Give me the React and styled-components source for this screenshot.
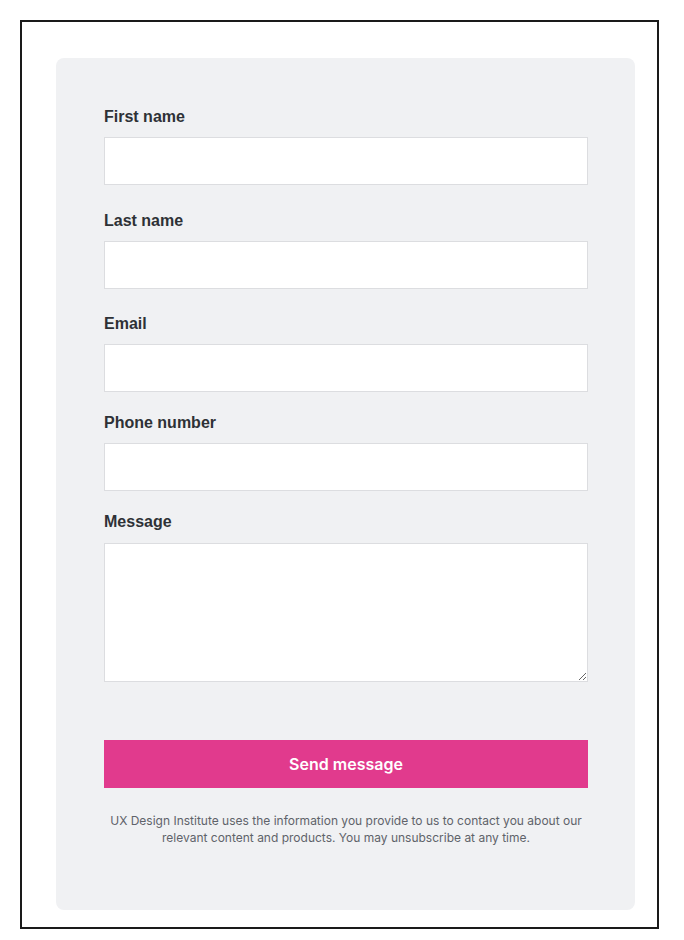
import React from "react";
import styled, { createGlobalStyle } from "styled-components";

const Global = createGlobalStyle`
  html, body { margin: 0; padding: 0; background: #ffffff; }
  * { box-sizing: border-box; }
`;

const Frame = styled.div`
  margin: 20px 0 0 20px;
  width: 639px;
  border: 2px solid #1a1a1a;
  padding: 36px 22px 17px 34px;
  background: #ffffff;
`;

const Card = styled.form`
  background: #f0f1f3;
  border-radius: 8px;
  padding: 49px 47px 64px 48px;
  display: flex;
  flex-direction: column;
`;

const Field = styled.div`
  display: flex;
  flex-direction: column;
  gap: ${(p) => p.$gap || 10}px;
  margin-top: ${(p) => p.$top || 0}px;
`;

const Label = styled.label`
  font-family: "Liberation Sans", Arial, sans-serif;
  font-weight: 700;
  font-size: 16px;
  line-height: 20px;
  color: #2e3136;
`;

const Input = styled.input`
  display: block;
  width: 100%;
  height: 48px;
  border: 1px solid #dcdde0;
  background: #ffffff;
  margin: 0;
  padding: 0 12px;
  font-family: "Inter", sans-serif;
  font-size: 15px;
  outline: none;
  border-radius: 0;
`;

const TextArea = styled.textarea`
  display: block;
  width: 100%;
  height: 139px;
  border: 1px solid #dcdde0;
  background: #ffffff;
  margin: 0;
  padding: 12px;
  font-family: "Inter", sans-serif;
  font-size: 15px;
  outline: none;
  border-radius: 0;
  resize: vertical;
`;

const Button = styled.button`
  margin-top: 58px;
  height: 48px;
  width: 100%;
  border: none;
  border-radius: 0;
  background: #e13a8d;
  color: #ffffff;
  font-family: "Inter", sans-serif;
  font-weight: 600;
  font-size: 16px;
  padding: 0 0 1px;
  cursor: pointer;
`;

const Note = styled.p`
  margin: 24px 0 0;
  text-align: center;
  font-family: "Inter", sans-serif;
  font-size: 12px;
  line-height: 17px;
  color: #5f636a;
  padding: 0;
`;

const fields = [
  { id: "first", label: "First name", top: 0 },
  { id: "last", label: "Last name", top: 26 },
  { id: "email", label: "Email", top: 25, type: "email" },
  { id: "phone", label: "Phone number", top: 21, type: "tel" },
];

export default function App() {
  return (
    <>
      <Global />
      <Frame>
        <Card onSubmit={(e) => e.preventDefault()}>
          {fields.map((f) => (
            <Field key={f.id} $top={f.top}>
              <Label htmlFor={f.id}>{f.label}</Label>
              <Input id={f.id} type={f.type || "text"} />
            </Field>
          ))}
          <Field $top={21} $gap={11}>
            <Label htmlFor="message">Message</Label>
            <TextArea id="message" />
          </Field>
          <Button type="submit">Send message</Button>
          <Note>
            UX Design Institute uses the information you provide to us to contact you about our
            relevant content and products. You may unsubscribe at any time.
          </Note>
        </Card>
      </Frame>
    </>
  );
}
